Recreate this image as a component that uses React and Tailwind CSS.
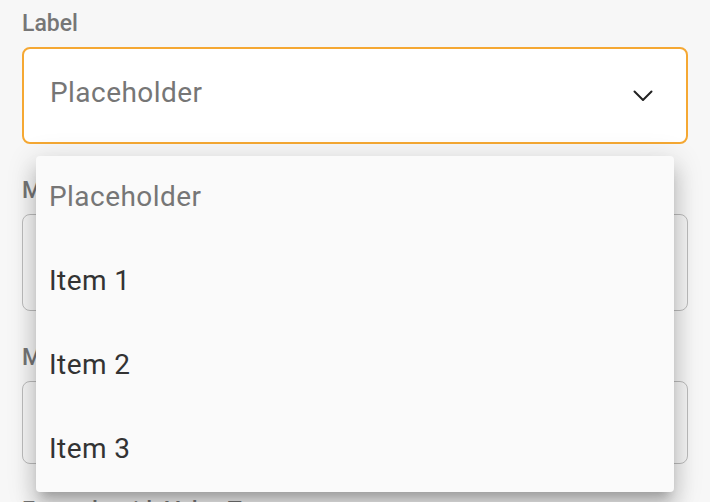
import React from 'react';

function Field({ label, children }) {
  return (
    <div className="flex flex-col">
      <label className="text-[23px] leading-[27px] font-medium text-[#767676] mb-[10px]">{label}</label>
      {children}
    </div>
  );
}

function Chevron() {
  return (
    <svg width="20" height="12" viewBox="0 0 20 12" fill="none">
      <path d="M1.5 1.5 L10 10 L18.5 1.5" stroke="#222" strokeWidth="2" strokeLinecap="round" strokeLinejoin="round" />
    </svg>
  );
}

export default function App() {
  const items = ['Item 1', 'Item 2', 'Item 3'];

  return (
    <div
      className="relative w-[710px] h-[502px] overflow-hidden bg-[#f7f7f7]"
      style={{ fontFamily: 'Roboto, "Liberation Sans", sans-serif' }}
    >
      <div className="flex flex-col gap-[33px] pt-[10px] pl-[22px] w-[688px]">
        <Field label="Label">
          <div className="h-[97px] flex items-center justify-between rounded-[8px] border-2 border-[#f5a833] bg-white pl-[26px] pr-[33px]">
            <span className="text-[28px] tracking-[0.45px] text-[#767676] pb-[5px]">Placeholder</span>
            <Chevron />
          </div>
        </Field>

        <Field label="Multiple Select">
          <div className="h-[97px] rounded-[8px] border border-[#bdbdbd]"></div>
        </Field>

        <Field label="Medium Size">
          <div className="h-[83px] rounded-[8px] border border-[#bdbdbd]"></div>
        </Field>

        <Field label="Example with Value Type">
          <div className="h-[97px] rounded-[8px] border border-[#bdbdbd]"></div>
        </Field>
      </div>

      {/* open menu */}
      <ul className="absolute top-[156px] left-[36px] w-[638px] rounded-[4px] bg-[#fafafa] shadow-[0_10px_10px_-6px_rgba(0,0,0,0.2),0_16px_20px_2px_rgba(0,0,0,0.14),0_6px_28px_4px_rgba(0,0,0,0.12)]">
        <li className="h-[84px] flex items-center pl-[13px] pb-[3px] text-[28px] tracking-[0.45px] text-[#767676]">Placeholder</li>
        {items.map(item => (
          <li key={item} className="h-[84px] flex items-center pl-[13px] pb-[3px] text-[28px] tracking-[0.45px] text-[#333]">
            {item}
          </li>
        ))}
      </ul>
    </div>
  );
}
